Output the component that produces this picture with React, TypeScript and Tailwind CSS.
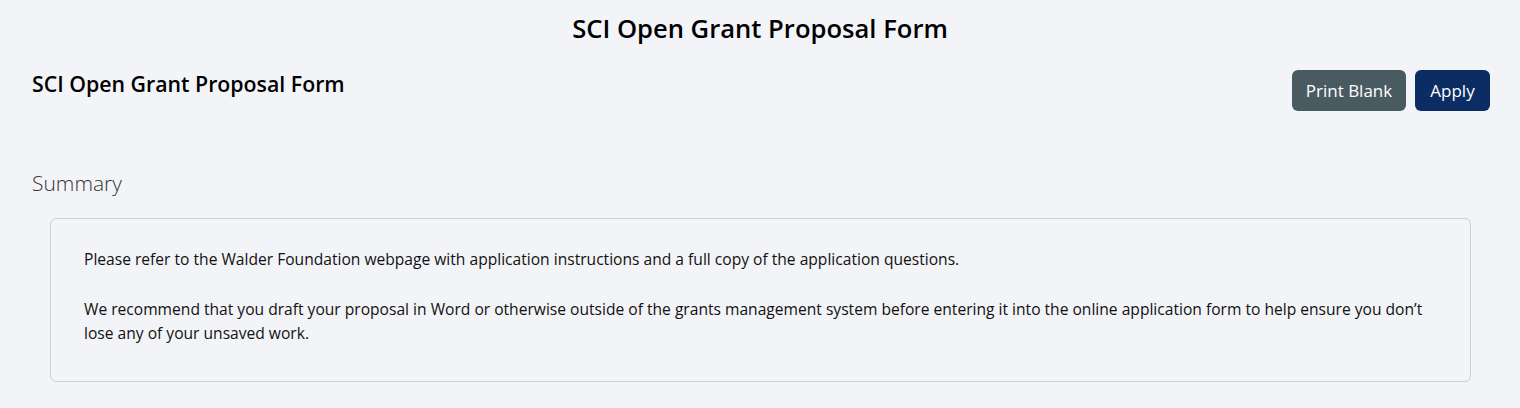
import React from "react";

export default function App() {
  return (
    <div className="min-h-[408px] bg-[#f3f4f8] text-[#111] font-['Open_Sans',sans-serif]">
      <h1 className="pt-[12px] text-center text-[25.6px] font-semibold leading-[34px] text-black">
        SCI Open Grant Proposal Form
      </h1>

      <div className="flex items-start justify-between pl-[32px] pr-[30px] pt-[24px]">
        <h2 className="text-[21.3px] font-semibold leading-[28px] text-black">
          SCI Open Grant Proposal Form
        </h2>
        <div className="flex gap-[9px]">
          <button className="h-[41px] w-[114px] rounded-[6px] bg-[#4a5a61] text-[17px] text-white">
            Print Blank
          </button>
          <button className="h-[41px] w-[75px] rounded-[6px] bg-[#0b2d63] text-[17px] text-white">
            Apply
          </button>
        </div>
      </div>

      <h3 className="mt-[57px] pl-[32px] text-[21px] font-light leading-[30px] text-[#333]">
        Summary
      </h3>

      <div className="mb-[26px] ml-[50px] mr-[49px] mt-[20px] rounded-[6px] border border-[#cfd0d3] pb-[36px] pl-[33px] pr-[33px] pt-[28px] text-[15.6px] leading-[24px] text-[#111]">
        <p className="mb-[26px]">
          Please refer to the Walder Foundation webpage with application instructions and a full copy of the
          application questions.
        </p>
        <p>
          We recommend that you draft your proposal in Word or otherwise outside of the grants management system
          before entering it into the online application form to help ensure you don’t lose any of your unsaved
          work.
        </p>
      </div>
    </div>
  );
}
